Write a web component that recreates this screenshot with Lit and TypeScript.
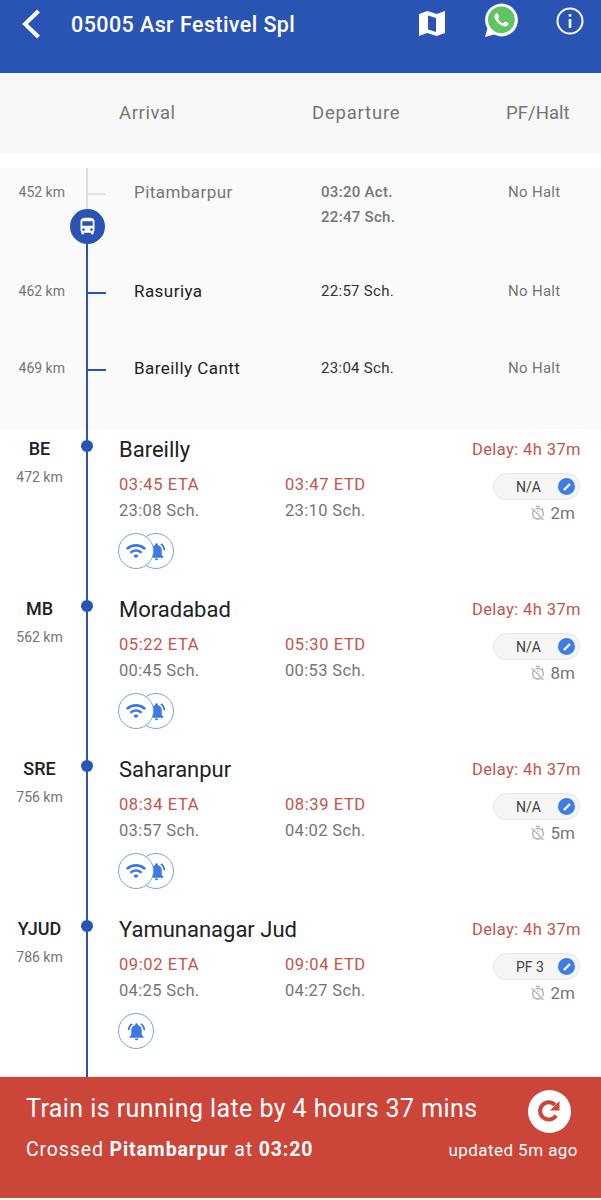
import { LitElement, html, css, svg } from 'lit';
import { customElement } from 'lit/decorators.js';

const WIFI = svg`<path d="M1 9l2 2c4.97-4.97 13.03-4.97 18 0l2-2C16.93 2.93 7.08 2.93 1 9zm8 8l3 3 3-3c-1.65-1.66-4.34-1.66-6 0zm-4-4l2 2c2.76-2.76 7.24-2.76 10 0l2-2C15.14 9.14 8.87 9.14 5 13z"/>`;
const BELL = svg`<path d="M7.58 4.08L6.15 2.65C3.75 4.48 2.17 7.3 2.03 10.5h2c.15-2.65 1.51-4.97 3.55-6.42zm12.39 6.42h2c-.15-3.2-1.73-6.02-4.12-7.85l-1.42 1.43c2.02 1.45 3.39 3.77 3.54 6.42zM18 11c0-3.07-1.64-5.64-4.5-6.32V4c0-.83-.67-1.5-1.5-1.5s-1.5.67-1.5 1.5v.68C7.63 5.36 6 7.92 6 11v5l-2 2v1h16v-1l-2-2v-5zm-6 11c.14 0 .27-.01.4-.04.65-.14 1.18-.58 1.44-1.18.1-.24.15-.5.15-.78h-4c.01 1.1.9 2 2.01 2z"/>`;
const TIMER_OFF = svg`<path d="M19.04 4.55l-1.42 1.42C16.07 4.74 14.12 4 12 4c-1.83 0-3.53.55-4.95 1.48l1.46 1.46C9.53 6.35 10.73 6 12 6c3.87 0 7 3.13 7 7 0 1.27-.35 2.47-.94 3.49l1.45 1.45C20.45 16.53 21 14.83 21 13c0-2.12-.74-4.07-1.97-5.61l1.42-1.42-1.41-1.42zM15 1H9v2h6V1zm-4 8.44l2 2V8h-2v1.44zM3.02 4L1.75 5.27 4.5 8.03C3.55 9.45 3 11.16 3 13c0 4.97 4.03 9 9 9 1.84 0 3.55-.55 4.98-1.5l2.5 2.5 1.27-1.27-7.71-7.71L3.02 4zM12 20c-3.87 0-7-3.13-7-7 0-1.28.35-2.48.95-3.52l9.56 9.56c-1.03.61-2.23.96-3.51.96z"/>`;
const TRAIN = svg`<path d="M4 16c0 .88.39 1.67 1 2.22V20c0 .55.45 1 1 1h1c.55 0 1-.45 1-1v-1h8v1c0 .55.45 1 1 1h1c.55 0 1-.45 1-1v-1.78c.61-.55 1-1.34 1-2.22V6c0-3.5-3.58-4-8-4s-8 .5-8 4v10zm3.5 1c-.83 0-1.5-.67-1.5-1.5S6.67 14 7.5 14s1.5.67 1.5 1.5S8.33 17 7.5 17zm9 0c-.83 0-1.5-.67-1.5-1.5s.67-1.5 1.5-1.5 1.5.67 1.5 1.5-.67 1.5-1.5 1.5zm1.5-6H6V6h12v5z"/>`;
const PHONE = svg`<path d="M17.472 14.382c-.297-.149-1.758-.867-2.03-.967-.273-.099-.471-.148-.67.15-.197.297-.767.966-.94 1.164-.173.199-.347.223-.644.075-.297-.15-1.255-.463-2.39-1.475-.883-.788-1.48-1.761-1.653-2.059-.173-.297-.018-.458.13-.606.134-.133.298-.347.446-.52.149-.174.198-.298.298-.497.099-.198.05-.371-.025-.52-.075-.149-.669-1.612-.916-2.207-.242-.579-.487-.5-.669-.51-.173-.008-.371-.01-.57-.01-.198 0-.52.074-.792.372-.272.297-1.04 1.016-1.04 2.479 0 1.462 1.065 2.875 1.213 3.074.149.198 2.096 3.2 5.077 4.487.709.306 1.262.489 1.694.625.712.227 1.36.195 1.871.118.571-.085 1.758-.719 2.006-1.413.248-.694.248-1.289.173-1.413-.074-.124-.272-.198-.57-.347z"/>`;

interface Passed {
  km: string;
  name: string;
  times: string[];
  height: number;
  grey?: boolean;
}

interface Stop {
  code: string;
  km: string;
  name: string;
  eta: string;
  etaSch: string;
  etd: string;
  etdSch: string;
  pf: string;
  halt: string;
  wifi: boolean;
}

const passed: Passed[] = [
  { km: '452 km', name: 'Pitambarpur', times: ['03:20 Act.', '22:47 Sch.'], height: 99, grey: true },
  { km: '462 km', name: 'Rasuriya', times: ['22:57 Sch.'], height: 77 },
  { km: '469 km', name: 'Bareilly Cantt', times: ['23:04 Sch.'], height: 85 },
];

const stops: Stop[] = [
  { code: 'BE', km: '472 km', name: 'Bareilly', eta: '03:45', etaSch: '23:08', etd: '03:47', etdSch: '23:10', pf: 'N/A', halt: '2m', wifi: true },
  { code: 'MB', km: '562 km', name: 'Moradabad', eta: '05:22', etaSch: '00:45', etd: '05:30', etdSch: '00:53', pf: 'N/A', halt: '8m', wifi: true },
  { code: 'SRE', km: '756 km', name: 'Saharanpur', eta: '08:34', etaSch: '03:57', etd: '08:39', etdSch: '04:02', pf: 'N/A', halt: '5m', wifi: true },
  { code: 'YJUD', km: '786 km', name: 'Yamunanagar Jud', eta: '09:02', etaSch: '04:25', etd: '09:04', etdSch: '04:27', pf: 'PF 3', halt: '2m', wifi: false },
];

@customElement('app-root')
export class AppRoot extends LitElement {
  static styles = css`
    :host {
      display: block;
      width: 601px;
      height: 1200px;
      background: #fff;
      font-family: Roboto, "Noto Sans", sans-serif;
      color: #212121;
      overflow: hidden;
    }

    .page {
      display: flex;
      flex-direction: column;
      height: 1198px;
    }

    /* Header */
    .header {
      height: 73px;
      box-sizing: border-box;
      background: #2a54b4;
      display: flex;
      align-items: flex-start;
      color: #fff;
    }

    .back {
      width: 19px;
      height: 30px;
      margin: 9px 0 0 22px;
      flex: none;
    }

    .title {
      margin: 10px 0 0 30px;
      font-size: 21.5px;
      line-height: 30px;
      font-weight: 500;
      letter-spacing: 0.42px;
      flex: 1;
    }

    .map {
      width: 28px;
      height: 27px;
      margin-top: 10px;
      flex: none;
    }

    .whatsapp {
      width: 34px;
      height: 34px;
      margin: 3px 0 0 38px;
      flex: none;
    }

    .info {
      width: 28px;
      height: 28px;
      margin: 7px 17px 0 38px;
      flex: none;
    }

    .labels {
      height: 80px;
      background: #f8f8f8;
      display: flex;
      align-items: center;
      color: #757575;
      font-size: 18.5px;
      letter-spacing: 0.6px;
      box-sizing: border-box;
    }

    .labels span:nth-child(1) { margin-left: 119px; width: 193px; }
    .labels span:nth-child(2) { width: 194px; letter-spacing: 0.8px; }
    .labels span:nth-child(3) { letter-spacing: 0.05px; }

    .gap {
      height: 15px;
    }

    /* Passed stations */
    .passed {
      background: #fafafa;
    }

    .p-row {
      display: flex;
      box-sizing: border-box;
    }

    .p-km {
      width: 65px;
      padding-top: 14px;
      text-align: right;
      font-size: 14px;
      line-height: 20px;
      color: #757575;
      margin-right: 7px;
      flex: none;
    }

    .rail {
      position: relative;
      width: 30px;
      flex: none;
    }

    .rail::before {
      content: '';
      position: absolute;
      left: 14px;
      top: 0;
      bottom: 0;
      width: 2px;
      background: #2a54b4;
    }

    .rail.grey::before {
      background: #dcdcdc;
      bottom: auto;
      height: 42px;
    }

    .rail.grey::after {
      content: '';
      position: absolute;
      left: 14px;
      top: 76px;
      bottom: 0;
      width: 2px;
      background: #2a54b4;
    }

    .tick {
      position: absolute;
      left: 16px;
      top: 25px;
      width: 18px;
      height: 2px;
      background: #2a54b4;
    }

    .rail.grey .tick {
      background: #e2e2e2;
    }

    .bus {
      position: absolute;
      left: -2px;
      top: 41px;
      width: 35px;
      height: 35px;
      border-radius: 50%;
      background: #2a54b4;
      display: flex;
      align-items: center;
      justify-content: center;
      z-index: 1;
    }

    .bus svg {
      width: 21px;
      height: 21px;
      fill: #fff;
    }

    .p-name {
      width: 187px;
      margin-left: 32px;
      padding-top: 12px;
      font-size: 17px;
      letter-spacing: 0.45px;
      line-height: 24px;
      flex: none;
      color: #212121;
    }

    .p-name.grey {
      color: #757575;
    }

    .p-times {
      width: 187px;
      padding-top: 12px;
      font-size: 15px;
      letter-spacing: 0.3px;
      line-height: 25px;
      color: #333;
      flex: none;
    }

    .p-row.first .p-times {
      color: #757575;
      font-weight: 500;
    }

    .p-halt {
      padding-top: 12px;
      font-size: 15px;
      letter-spacing: 0.3px;
      line-height: 24px;
      color: #757575;
    }

    /* Upcoming stops */
    .stops {
      flex: 1;
      display: flex;
      flex-direction: column;
    }

    .stop {
      height: 160px;
      display: flex;
      flex: none;
    }

    .stop:last-child {
      flex: 1;
    }

    .code {
      width: 65px;
      margin-left: 7px;
      text-align: center;
      padding-top: 8px;
      flex: none;
      box-sizing: border-box;
    }

    .code b {
      display: block;
      font-size: 18px;
      font-weight: 500;
      line-height: 24px;
      color: #212121;
    }

    .code small {
      display: block;
      margin-top: 7px;
      font-size: 14px;
      line-height: 18px;
      color: #757575;
    }

    .dot {
      position: absolute;
      left: 9px;
      top: 11px;
      width: 12px;
      height: 12px;
      border-radius: 50%;
      background: #2a54b4;
    }

    .body {
      flex: 1;
      padding: 7px 20px 0 17px;
      display: grid;
      grid-template-columns: 166px 1fr auto;
      grid-template-rows: 27px 35px 26px auto;
      align-content: start;
    }

    .name {
      grid-column: 1 / 3;
      font-size: 22px;
      line-height: 27px;
      color: #212121;
    }

    .delay {
      font-size: 16.5px;
      letter-spacing: 0.4px;
      line-height: 27px;
      color: #c4544a;
      text-align: right;
    }

    .eta {
      font-size: 16.5px;
      letter-spacing: 0.6px;
      line-height: 26px;
      padding-top: 9px;
      color: #c4544a;
    }

    .sch {
      font-size: 16.5px;
      letter-spacing: 0.35px;
      line-height: 26px;
      color: #757575;
    }

    .side {
      grid-column: 3;
      grid-row: 2 / 4;
      display: flex;
      flex-direction: column;
      align-items: flex-end;
      padding: 10px 1px 0 0;
    }

    .pill {
      width: 87px;
      height: 27px;
      flex: none;
      box-sizing: border-box;
      border: 1px solid #e4e4e4;
      border-radius: 14px;
      background: #f6f6f6;
      display: flex;
      align-items: center;
      justify-content: space-between;
      padding: 0 4px 0 22px;
      font-size: 14px;
      color: #424242;
    }

    .edit {
      width: 17px;
      height: 17px;
      border-radius: 50%;
      background: #3b7fe6;
      display: flex;
      align-items: center;
      justify-content: center;
    }

    .edit svg {
      width: 12px;
      height: 12px;
    }

    .halt {
      margin: 2px 5px 0 0;
      display: flex;
      align-items: center;
      gap: 5px;
      font-size: 17px;
      line-height: 22px;
      flex: none;
      color: #757575;
    }

    .halt svg {
      width: 16px;
      height: 16px;
      fill: #b0b0b0;
    }

    .alerts {
      grid-column: 1 / -1;
      display: flex;
      padding-top: 9px;
      margin-left: -1px;
    }

    .alert {
      width: 36px;
      height: 36px;
      box-sizing: border-box;
      border: 1px solid #7d9ee8;
      border-radius: 50%;
      background: #fff;
      display: flex;
      align-items: center;
      justify-content: center;
    }

    .alert svg {
      width: 22px;
      height: 22px;
      fill: #3b78e7;
    }

    .alert.wifi {
      position: relative;
      z-index: 1;
    }

    .alert.wifi + .alert {
      margin-left: -16px;
    }

    .alert.small-bell svg {
      width: 21px;
      height: 21px;
    }

    /* Footer */
    .footer {
      height: 121px;
      box-sizing: border-box;
      background: #cb4539;
      color: #fff;
      padding: 13px 23px 0 26px;
      flex: none;
      box-shadow: 0 -1px 2px rgba(0, 0, 0, 0.08);
    }

    .f-top, .f-bottom {
      display: flex;
      justify-content: space-between;
    }

    .f-top {
      align-items: center;
      height: 42px;
    }

    .f-title {
      font-size: 25px;
      letter-spacing: 0.42px;
      padding-bottom: 6px;
    }

    .refresh {
      width: 43px;
      height: 43px;
      border-radius: 50%;
      background: #fff;
      display: flex;
      align-items: center;
      justify-content: center;
      margin-right: 7px;
    }

    .refresh svg {
      width: 27px;
      height: 27px;
    }

    .f-bottom {
      margin-top: 3px;
      font-size: 19.5px;
      letter-spacing: 0.88px;
      line-height: 30px;
      align-items: baseline;
    }

    .f-bottom b {
      font-weight: 700;
    }

    .f-updated {
      font-size: 17px;
      letter-spacing: 0.45px;
    }
  `;

  private renderPassed(p: Passed, i: number) {
    return html`
      <div class="p-row ${i === 0 ? 'first' : ''}" style="height:${p.height}px">
        <div class="p-km">${p.km}</div>
        <div class="rail ${p.grey ? 'grey' : ''}">
          <div class="tick"></div>
          ${p.grey
            ? html`<div class="bus"><svg viewBox="0 0 24 24">${TRAIN}</svg></div>`
            : ''}
        </div>
        <div class="p-name ${p.grey ? 'grey' : ''}">${p.name}</div>
        <div class="p-times">${p.times.map((t) => html`<div>${t}</div>`)}</div>
        <div class="p-halt">No Halt</div>
      </div>
    `;
  }

  private renderStop(s: Stop) {
    return html`
      <div class="stop">
        <div class="code"><b>${s.code}</b><small>${s.km}</small></div>
        <div class="rail"><div class="dot"></div></div>
        <div class="body">
          <div class="name">${s.name}</div>
          <div class="delay">Delay: 4h 37m</div>
          <div class="eta">${s.eta} ETA</div>
          <div class="eta">${s.etd} ETD</div>
          <div class="side">
            <div class="pill">
              <span>${s.pf}</span>
              <span class="edit">
                <svg viewBox="0 0 12 12"><path d="M3 9L9 3" stroke="#fff" stroke-width="2.4" /></svg>
              </span>
            </div>
            <div class="halt"><svg viewBox="0 0 24 24">${TIMER_OFF}</svg>${s.halt}</div>
          </div>
          <div class="sch">${s.etaSch} Sch.</div>
          <div class="sch">${s.etdSch} Sch.</div>
          <div class="alerts">
            ${s.wifi
              ? html`<div class="alert wifi"><svg viewBox="0 0 24 24">${WIFI}</svg></div>`
              : ''}
            <div class="alert small-bell"><svg viewBox="0 0 24 24">${BELL}</svg></div>
          </div>
        </div>
      </div>
    `;
  }

  render() {
    return html`
      <div class="page">
        <header class="header">
          <svg class="back" viewBox="0 0 19 30" fill="none" stroke="#fff" stroke-width="4">
            <path d="M16.5 2L3 15l13.5 13" />
          </svg>
          <div class="title">05005 Asr Festivel Spl</div>
          <svg class="map" viewBox="0 0 28 27">
            <path fill="#fff" d="M1 4l8.5-3 9 3 8.5-3v22l-8.5 3-9-3L1 26z" />
            <path fill="#2a54b4" d="M10 5.5l8 2.5v14l-8-2.5z" />
          </svg>
          <svg class="whatsapp" viewBox="0 0 34 34">
            <path fill="#fff" d="M1 34l2.4-8.6A16.4 16.4 0 1 1 10 31.6z" />
            <circle cx="17.4" cy="16.8" r="13.4" fill="#5fc463" />
            <g fill="#fff" transform="translate(3.4 2.8) scale(1.17)">${PHONE}</g>
          </svg>
          <svg class="info" viewBox="0 0 28 28" fill="none" stroke="#fff">
            <circle cx="14" cy="14" r="12.5" stroke-width="2" />
            <path d="M14 12v9" stroke-width="2.6" />
            <path d="M14 7v2.6" stroke-width="2.6" />
          </svg>
        </header>
        <div class="labels">
          <span>Arrival</span>
          <span>Departure</span>
          <span>PF/Halt</span>
        </div>
        <div class="gap"></div>
        <section class="passed">${passed.map((p, i) => this.renderPassed(p, i))}</section>
        <section class="stops">${stops.map((s) => this.renderStop(s))}</section>
        <footer class="footer">
          <div class="f-top">
            <div class="f-title">Train is running late by 4 hours 37 mins</div>
            <div class="refresh">
              <svg viewBox="0 0 27 27" fill="none" stroke="#cb4539" stroke-width="4">
                <path d="M20 17.5A8.6 8.6 0 1 1 19 7" />
                <path fill="#cb4539" stroke="none" d="M23.5 3v9.5H14z" />
              </svg>
            </div>
          </div>
          <div class="f-bottom">
            <div>Crossed <b>Pitambarpur</b> at <b>03:20</b></div>
            <div class="f-updated">updated 5m ago</div>
          </div>
        </footer>
      </div>
    `;
  }
}
